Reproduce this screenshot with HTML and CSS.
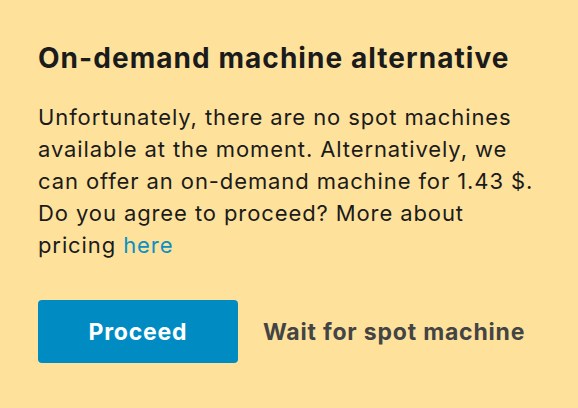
FILE: index.html
```html
<!DOCTYPE html>
<html lang="en">

<head>
    <meta charset="utf-8">
    <title>On-demand machine alternative</title>
    <link rel="stylesheet" href="styles.css">
</head>

<body>
    <section class="dialog">
        <h2 class="dialog-title">On-demand machine alternative</h2>
        <p class="dialog-text">Unfortunately, there are no spot machines available at the moment. Alternatively, we can offer an on-demand machine for 1.43 $. Do you agree to proceed? More about pricing <a href="#" class="link">here</a></p>
        <div class="actions">
            <button class="btn-primary">Proceed</button>
            <button class="btn-text">Wait for spot machine</button>
        </div>
    </section>
</body>

</html>
```

FILE: styles.css
```css
body {
    margin: 0;
    background-color: #fee29c;
    font-family: Inter, "Noto Sans", sans-serif;
    color: #1b1b1b;
}

.dialog {
    width: 578px;
    height: 408px;
    box-sizing: border-box;
    padding: 40px 38px 0 38px;
}

.dialog-title {
    margin: 0;
    font-size: 28px;
    font-weight: 700;
    line-height: 36px;
    letter-spacing: 1.05px;
}

.dialog-text {
    margin: 25px 0 0 0;
    font-size: 22px;
    line-height: 32px;
    letter-spacing: 0.9px;
}

.link {
    color: #0a8fc4;
    text-decoration: none;
}

.actions {
    display: flex;
    align-items: center;
    gap: 25px;
    margin-top: 39px;
}

.btn-primary {
    width: 200px;
    height: 63px;
    border: 0;
    border-radius: 4px;
    background-color: #008cc3;
    color: #fff;
    font-family: inherit;
    font-size: 23px;
    font-weight: 700;
    letter-spacing: 0.8px;
}

.btn-text {
    border: 0;
    padding: 0;
    background: none;
    color: #444;
    font-family: inherit;
    font-size: 23px;
    font-weight: 700;
    letter-spacing: 0.8px;
}
```
